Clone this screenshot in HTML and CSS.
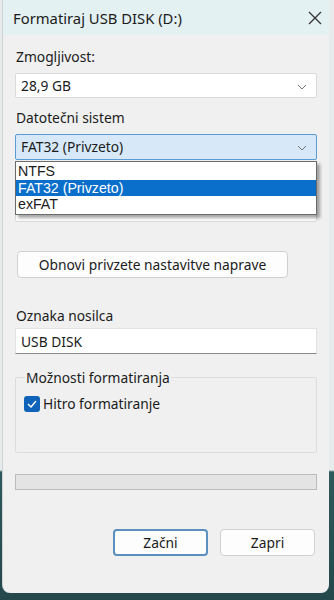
FILE: index.html
```html
<!DOCTYPE html>
<html lang="sl">
<head>
<meta charset="UTF-8"/>
<title>Formatiraj USB DISK (D:)</title>
<link rel="stylesheet" href="styles.css">
</head>
<body>
<div class="okno">
 <div class="naslov">
  <span class="naslov-besedilo">Formatiraj USB DISK (D:)</span>
  <svg class="zapri-x" width="14" height="14" viewBox="0 0 14 14"><path d="M1 1 L13 13 M13 1 L1 13" stroke="#333" stroke-width="1.3" fill="none"/></svg>
 </div>
 <div class="vsebina">
  <div class="oznaka prva">Zmogljivost:</div>
  <div class="izbira">28,9 GB<svg class="puscica" width="10" height="6" viewBox="0 0 10 6"><path d="M1 1 L5 5 L9 1" stroke="#777" stroke-width="1" fill="none"/></svg></div>

  <div class="oznaka">Datotečni sistem</div>
  <div class="spust">
   <div class="izbira aktivna">FAT32 (Privzeto)<svg class="puscica" width="10" height="6" viewBox="0 0 10 6"><path d="M1 1 L5 5 L9 1" stroke="#777" stroke-width="1" fill="none"/></svg></div>
   <div class="seznam">
    <div class="postavka">NTFS</div>
    <div class="postavka izbrana">FAT32 (Privzeto)</div>
    <div class="postavka">exFAT</div>
   </div>
  </div>

  <!-- pod seznamom: velikost enote dodeljevanja (skrita) -->
  <div class="oznaka prazna"></div>
  <div class="izbira"></div>

  <button class="gumb obnovi">Obnovi privzete nastavitve naprave</button>

  <div class="oznaka nosilec">Oznaka nosilca</div>
  <div class="vnos">USB DISK</div>

  <fieldset class="skupina">
   <legend>Možnosti formatiranja</legend>
   <label class="potrditev"><span class="kvadrat"><svg width="10" height="8" viewBox="0 0 10 8"><path d="M1 4 L4 7 L9 1" stroke="#fff" stroke-width="1.4" fill="none"/></svg></span>Hitro formatiranje</label>
  </fieldset>

  <div class="napredek"></div>

  <div class="gumbi">
   <button class="gumb privzeti">Začni</button>
   <button class="gumb">Zapri</button>
  </div>
 </div>
</div>
</body>
</html>
```

FILE: styles.css
```css
body{
 margin: 0;
 width: 334px;
 height: 600px;
 overflow: hidden;
 background: linear-gradient(to bottom, #e8ebeb 0, #e8ebeb 470px, #2d5a5c 472px, #24484b 600px);
 font-family: "Noto Sans", "Liberation Sans", sans-serif;
 font-size: 13.8px;
 color: #1b1b1b;
}
.okno{
 margin-left: 2px;
 width: 327px;
 height: 593px;
 background: #f0f0f0;
 border-radius: 0 0 8px 8px;
 border-left: 1px solid #cfd3d3;
 box-sizing: border-box;
}
.naslov{
 height: 35px;
 background: #e3f1f3;
 display: flex;
 align-items: center;
 justify-content: space-between;
 padding: 0 7px 0 10px;
 font-size: 14.8px;
}
.vsebina{
 padding: 0 12px;
}
.oznaka{
 line-height: 16px;
 margin-top: 12px;
 padding-left: 1px;
}
.oznaka.prva{
 margin-top: 14px;
}
.oznaka.prazna{
 height: 16px;
 margin-top: 13px;
}
.izbira{
 position: relative;
 margin-top: 8px;
 height: 25px;
 line-height: 24px;
 background: #fff;
 border: 1px solid #dadada;
 border-radius: 2px;
 padding-left: 5px;
 box-sizing: border-box;
}
.puscica{
 position: absolute;
 right: 9px;
 top: 10px;
}
.izbira.aktivna{
 height: 26px;
 background: #d7e9f8;
 border-color: #5a9bd3;
}
.spust{
 position: relative;
}
.seznam{
 position: absolute;
 left: 0;
 right: 0;
 top: 27px;
 background: #fff;
 border: 1px solid #6b6b6b;
 box-shadow: 3px 3px 3px rgba(0,0,0,0.35);
 font-family: "Liberation Sans", sans-serif;
 font-size: 14.2px;
 padding: 1px 0;
 z-index: 2;
}
.postavka{
 height: 16.5px;
 line-height: 16px;
 padding-left: 2px;
}
.postavka.izbrana{
 background: #0a6fcb;
 color: #fff;
}
.gumb{
 font-family: inherit;
 font-size: 13.8px;
 color: #1b1b1b;
 background: #fdfdfd;
 border: 1px solid #d0d0d0;
 border-radius: 4px;
 height: 27px;
 padding: 0;
}
.obnovi{
 display: block;
 margin: 29px 0 0 2px;
 width: 271px;
}
.oznaka.nosilec{
 margin-top: 30px;
}
.vnos{
 margin-top: 4px;
 height: 26px;
 line-height: 25px;
 background: #fff;
 border: 1px solid #e2e2e2;
 border-bottom: 1px solid #8a8a8a;
 padding-left: 5px;
 box-sizing: border-box;
}
.skupina{
 margin: 14px 0 0 0;
 height: 85px;
 box-sizing: border-box;
 border: 1px solid #dcdcdc;
 border-radius: 2px;
 padding: 7px 8px;
}
.skupina legend{
 padding: 0 1px;
 margin-left: 1px;
}
.potrditev{
 display: flex;
 align-items: center;
 gap: 3px;
}
.kvadrat{
 width: 16px;
 height: 16px;
 background: #0f63b8;
 border-radius: 3px;
 display: flex;
 align-items: center;
 justify-content: center;
}
.napredek{
 margin-top: 21px;
 height: 16px;
 background: #e4e4e4;
 border: 1px solid #bcbcbc;
 box-sizing: border-box;
}
.gumbi{
 display: flex;
 justify-content: flex-end;
 gap: 12px;
 margin-top: 39px;
 padding-right: 2px;
}
.gumbi .gumb{
 width: 95px;
}
.gumb.privzeti{
 border: 2px solid #5b8fc0;
}
```
